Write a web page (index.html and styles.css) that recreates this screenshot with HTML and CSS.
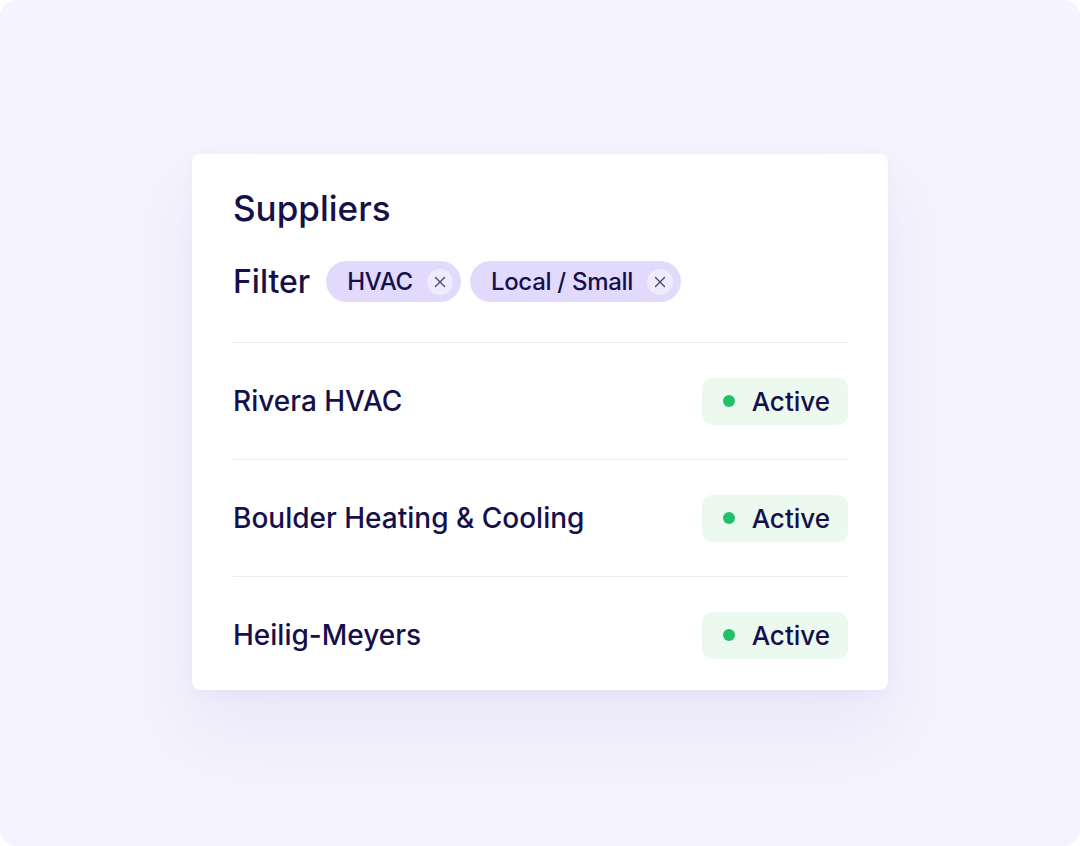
FILE: index.html
```html
<!DOCTYPE html>
<html lang="en">
<head>
    <meta charset="UTF-8">
    <meta name="viewport" content="width=device-width, initial-scale=1.0">
    <title>Suppliers</title>
    <link rel="stylesheet" href="styles.css">
</head>
<body>
    <div class="frame">
        <div class="card">
            <h1 class="title">Suppliers</h1>
            <div class="filter-row">
                <span class="filter-label">Filter</span>
                <span class="chip">HVAC
                    <span class="chip-close">
                        <svg width="12" height="12" viewBox="0 0 12 12"><path d="M1.5 1.5L10.5 10.5M10.5 1.5L1.5 10.5" stroke="#4a4670" stroke-width="1.4" stroke-linecap="round"/></svg>
                    </span>
                </span>
                <span class="chip">Local / Small
                    <span class="chip-close">
                        <svg width="12" height="12" viewBox="0 0 12 12"><path d="M1.5 1.5L10.5 10.5M10.5 1.5L1.5 10.5" stroke="#4a4670" stroke-width="1.4" stroke-linecap="round"/></svg>
                    </span>
                </span>
            </div>
            <ul class="supplier-list">
                <li class="supplier">
                    <span class="supplier-name">Rivera HVAC</span>
                    <span class="status"><span class="dot"></span>Active</span>
                </li>
                <li class="supplier">
                    <span class="supplier-name">Boulder Heating &amp; Cooling</span>
                    <span class="status"><span class="dot"></span>Active</span>
                </li>
                <li class="supplier">
                    <span class="supplier-name">Heilig-Meyers</span>
                    <span class="status"><span class="dot"></span>Active</span>
                </li>
            </ul>
        </div>
    </div>
</body>
</html>
```

FILE: styles.css
```css
body {
    margin: 0;
    padding: 0;
    background: #ffffff;
    font-family: 'Inter', 'Noto Sans', sans-serif;
    color: #16104a;
}

.frame {
    width: 1080px;
    height: 846px;
    background: #f5f3fd;
    border-radius: 16px;
    display: flex;
    justify-content: center;
    padding-top: 154px;
    box-sizing: border-box;
}

.card {
    width: 696px;
    height: 536px;
    box-sizing: border-box;
    background: #ffffff;
    border-radius: 8px;
    padding: 35px 40px 0 41px;
    box-shadow: 0 40px 70px rgba(90, 70, 190, 0.07), 0 4px 14px rgba(90, 70, 190, 0.04);
}

.title {
    margin: 0;
    font-size: 35px;
    line-height: 38px;
    font-weight: 500;
}

.filter-row {
    display: flex;
    align-items: center;
    margin-top: 34px;
    padding-bottom: 40px;
    border-bottom: 1px solid #ececf3;
}

.filter-label {
    font-size: 32px;
    font-weight: 500;
    margin-right: 16px;
}

.chip {
    display: inline-flex;
    align-items: center;
    height: 41px;
    padding: 0 8px 0 21px;
    margin-right: 9px;
    background: #e2dafc;
    border-radius: 21px;
    font-size: 24px;
    font-weight: 500;
    letter-spacing: -0.3px;
    box-sizing: border-box;
}

.chip-close {
    display: inline-flex;
    align-items: center;
    justify-content: center;
    width: 26px;
    height: 26px;
    margin-left: 14px;
    border-radius: 50%;
    background: #efebfd;
}

.supplier-list {
    list-style: none;
    margin: 0;
    padding: 0;
}

.supplier {
    display: flex;
    align-items: center;
    justify-content: space-between;
    height: 116px;
    border-bottom: 1px solid #ececf3;
}

.supplier:last-child {
    border-bottom: none;
}

.supplier-name {
    font-size: 28px;
    font-weight: 500;
}

.status {
    display: inline-flex;
    align-items: center;
    height: 47px;
    padding: 0 18px 0 21px;
    background: #ebf9ef;
    border-radius: 10px;
    font-size: 26px;
    font-weight: 500;
    box-sizing: border-box;
}

.dot {
    width: 12px;
    height: 12px;
    border-radius: 50%;
    background: #22c067;
    margin-right: 17px;
}
```
